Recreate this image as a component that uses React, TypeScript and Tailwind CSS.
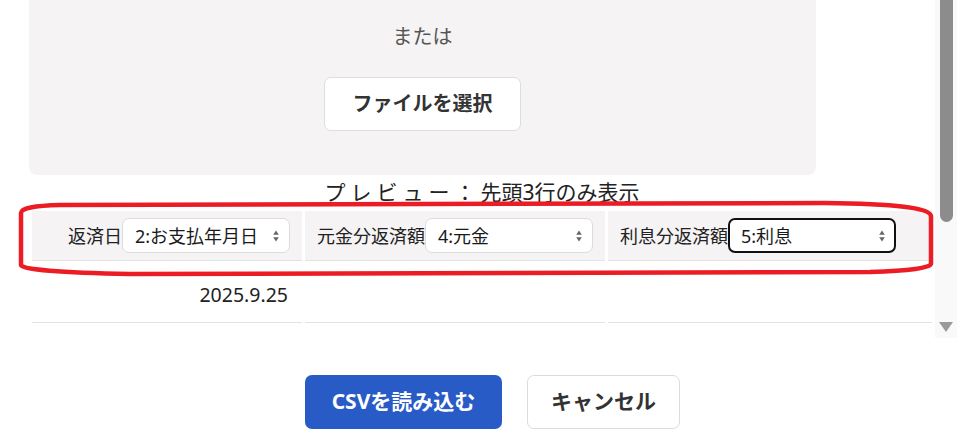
import React from "react";

const SortArrows = () => (
  <svg width="6" height="12" viewBox="0 0 6 12" className="shrink-0">
    <path d="M3 0.5 L5.8 4.8 L0.2 4.8 Z" fill="#666" />
    <path d="M3 11.5 L5.8 7.2 L0.2 7.2 Z" fill="#666" />
  </svg>
);

const FakeSelect = ({ value, focused = false }: { value: string; focused?: boolean }) => (
  <div
    className={
      focused
        ? "w-[168px] h-[35px] shrink-0 rounded-[7px] border-2 border-[#111] bg-white flex items-center justify-between pl-[11px] pr-[9px]"
        : "w-[168px] h-[35px] shrink-0 rounded-[7px] border border-[#dcdcdc] bg-white flex items-center justify-between pl-[12px] pr-[10px]"
    }
  >
    <span className="text-[18px] text-[#1a1a1a] leading-none">{value}</span>
    <SortArrows />
  </div>
);

const columns = [
  { label: "返済日", value: "2:お支払年月日", align: "justify-end pr-[12px]", focused: false },
  { label: "元金分返済額", value: "4:元金", align: "justify-start pl-[12px]", focused: false },
  { label: "利息分返済額", value: "5:利息", align: "justify-start pl-[12px]", focused: true },
];

export default function App() {
  return (
    <div className="relative w-[979px] h-[447px] overflow-hidden bg-white text-[#222] font-['Noto_Sans','Noto_Sans_CJK_JP',sans-serif]">
      {/* scrolling body */}
      <div className="flex h-[338px]">
        <div className="w-[935px] h-[338px] overflow-hidden">
          {/* drop zone */}
          <div className="ml-[29px] w-[787px] h-[175px] bg-[#f5f3f4] rounded-b-[8px] flex flex-col items-center">
            <p className="pt-[24px] text-[20px] leading-[26px] text-[#555]">または</p>
            <button className="mt-[27px] w-[197px] h-[54px] rounded-[7px] border border-[#dedede] bg-white text-[20px] font-bold text-[#333]">
              ファイルを選択
            </button>
          </div>

          {/* preview title */}
          <h3 className="ml-[32px] w-[900px] h-[36px] text-center text-[21px] leading-[34px] font-normal text-[#222]">
            <span className="tracking-[5px]">プレビュー：</span>先頭3行のみ表示
          </h3>

          {/* preview table */}
          <div className="ml-[32px] grid grid-cols-[270px_300px_324px] gap-x-[3px]">
            {columns.map((c) => (
              <div
                key={c.label}
                className={`h-[50px] bg-[#f5f3f4] border-b border-[#e3e3e3] flex items-center ${c.align}`}
              >
                <span className="text-[18px] leading-none text-[#222] whitespace-nowrap">{c.label}</span>
                <FakeSelect value={c.value} focused={c.focused} />
              </div>
            ))}
            <div className="h-[62px] border-b border-[#e3e3e3] flex items-center justify-end pr-[14px] pt-[6px] text-[19.5px] text-[#222]">
              2025.9.25
            </div>
            <div className="h-[62px] border-b border-[#e3e3e3]" />
            <div className="h-[62px] border-b border-[#e3e3e3]" />
          </div>
        </div>

        {/* scrollbar */}
        <div className="w-[22px] h-[338px] bg-[#f9f9f9] flex flex-col items-center justify-between">
          <div className="w-[13px] h-[222px] bg-[#8c8c8c] rounded-b-[7px]" />
          <svg width="14" height="10" viewBox="0 0 14 10" className="mb-[6px]">
            <path d="M0 0 H14 L7 10 Z" fill="#9a9a9a" />
          </svg>
        </div>
      </div>

      {/* footer buttons */}
      <div className="flex justify-center gap-[25px] pt-[37px] pl-[6px]">
        <button className="w-[197px] h-[54px] rounded-[7px] bg-[#295bc7] text-white text-[21px] font-bold">
          CSVを読み込む
        </button>
        <button className="w-[153px] h-[54px] rounded-[7px] border border-[#dcdcdc] bg-white text-[#333] text-[21px] font-bold">
          キャンセル
        </button>
      </div>

      {/* red hand-drawn annotation */}
      <svg
        className="absolute left-0 top-0 pointer-events-none"
        width="979"
        height="447"
        viewBox="0 0 979 447"
      >
        <path
          d="M21 213 Q21 206 60 205 L825 203 Q930 204 931 216 L931 264 Q930 270 870 272 L130 274 Q24 272 21 265 Z"
          fill="none"
          stroke="#ec1c24"
          strokeWidth="4.5"
          strokeLinejoin="round"
        />
      </svg>
    </div>
  );
}
